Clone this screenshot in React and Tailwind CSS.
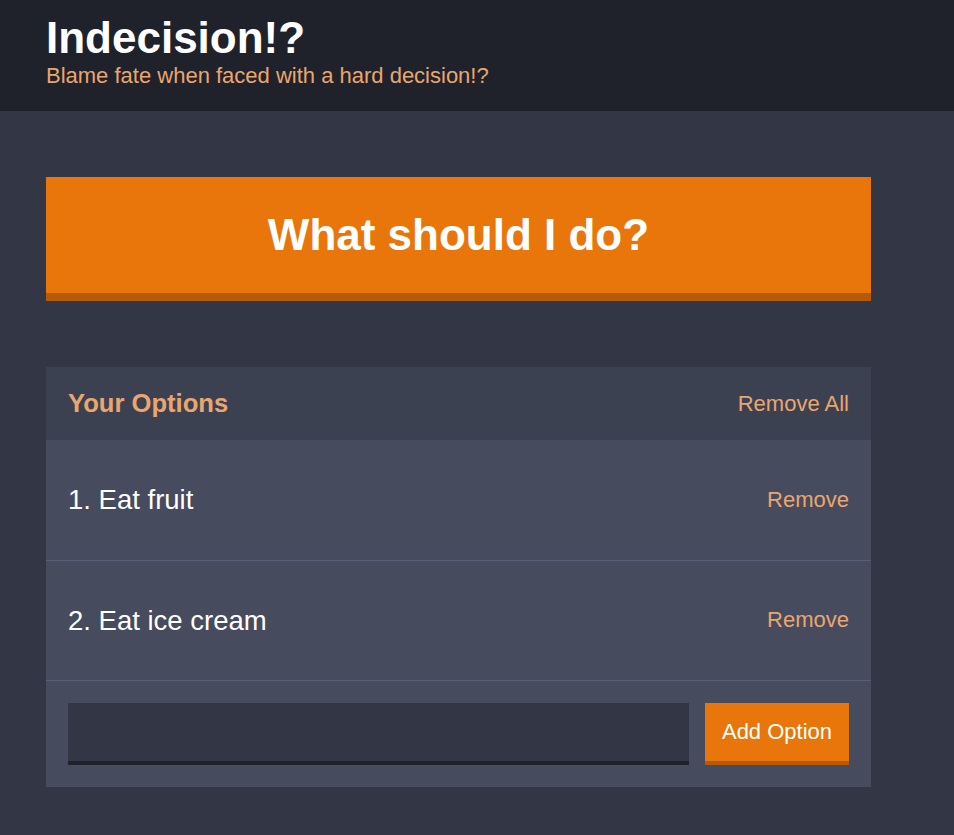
import React, { useState } from 'react';

const font = { fontFamily: '"Liberation Sans", Arial, sans-serif' };

export default function App() {
  const [options, setOptions] = useState(['Eat fruit', 'Eat ice cream']);
  const [text, setText] = useState('');

  const addOption = (e) => {
    e.preventDefault();
    const value = text.trim();
    if (!value) return;
    setOptions([...options, value]);
    setText('');
  };

  return (
    <div className="min-h-screen bg-[#333745] text-white" style={font}>
      {/* --- HEADER --- */}
      <header className="bg-[#20222b] pt-[16px] pb-[24px]">
        <div className="ml-[46px] w-[825px]">
          <h1 className="text-[44px] font-bold leading-none text-white">Indecision!?</h1>
          <h2 className="mt-[5px] text-[22px] leading-none text-[#e9a66f]">
            Blame fate when faced with a hard decision!?
          </h2>
        </div>
      </header>

      {/* --- MAIN --- */}
      <main className="ml-[46px] w-[825px] pt-[66px] pb-[48px]">
        <button
          disabled={options.length === 0}
          className="flex h-[124px] w-full items-center justify-center border-b-[8px] border-[#b55b07] bg-[#e8760a] text-[44px] font-bold leading-none text-white"
        >
          What should I do?
        </button>

        <div className="mt-[66px] bg-[#464b5e]">
          <div className="flex h-[73px] items-center justify-between bg-[#3c4151] px-[22px]">
            <h3 className="text-[25.6px] font-bold leading-none text-[#e9a66f]">Your Options</h3>
            <button
              onClick={() => setOptions([])}
              className="text-[22px] leading-none text-[#e9a66f]"
            >
              Remove All
            </button>
          </div>

          {options.map((option, i) => (
            <div
              key={i}
              className="flex h-[120.5px] items-center justify-between border-b border-[#5a5f78] px-[22px]"
            >
              <p className="text-[27.5px] leading-none text-white">
                {i + 1}. {option}
              </p>
              <button
                onClick={() => setOptions(options.filter((_, j) => j !== i))}
                className="text-[22px] leading-none text-[#e9a66f]"
              >
                Remove
              </button>
            </div>
          ))}

          <form onSubmit={addOption} className="flex gap-[16px] p-[22px]">
            <input
              value={text}
              onChange={(e) => setText(e.target.value)}
              className="h-[62px] flex-1 border-b-[4px] border-[#20222b] bg-[#333745] px-3 text-[22px] text-white outline-none"
            />
            <button className="h-[62px] w-[144px] border-b-[4px] border-[#b55b07] bg-[#e8760a] text-[22px] leading-none text-white">
              Add Option
            </button>
          </form>
        </div>
      </main>
    </div>
  );
}
